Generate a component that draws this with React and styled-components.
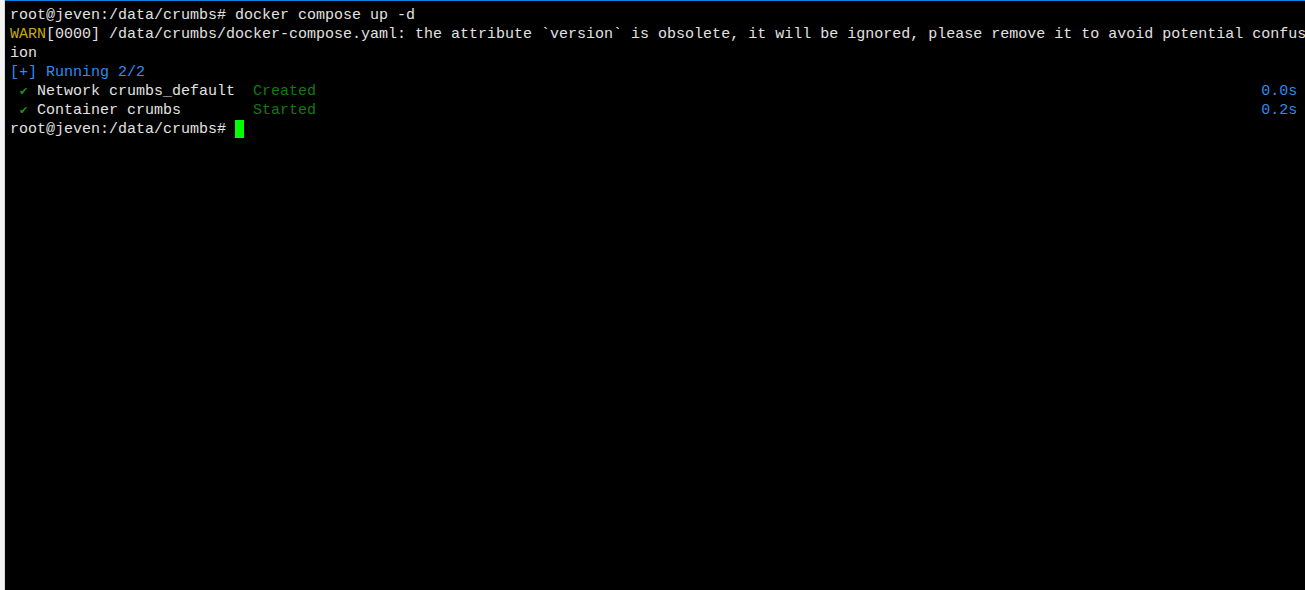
import React from "react";
import styled, { createGlobalStyle } from "styled-components";

const Global = createGlobalStyle`
  html, body { margin: 0; padding: 0; background: #f0f0f0; }
  body { width: 1305px; height: 590px; overflow: hidden; }
`;

const Window = styled.div`
  display: flex;
  width: 1305px;
  height: 590px;
  background: #f0f0f0;
`;

const Frame = styled.div`
  width: 4px;
  flex: none;
  background: #f3f3f3;
  border-right: 1px solid #d9d9d9;
`;

const Terminal = styled.div`
  flex: 1;
  min-width: 0;
  background: #000;
  border-top: 1px solid #0a84e0;
  padding: 5px 0 0 5px;
  overflow: hidden;
  font-family: "Liberation Mono", "DejaVu Sans Mono", monospace;
  font-size: 15px;
  line-height: 19px;
  color: #e2e2e2;
`;

const Line = styled.div`
  white-space: pre;
  height: 19px;
`;

const Tone = styled.span`
  color: ${(p) =>
    ({
      warn: "#c8aa00",
      blue: "#2f8cf0",
      green: "#137a13",
      check: "#1f8f1f",
    })[p.$tone] || "inherit"};
`;

const Check = styled.span`
  display: inline-block;
  width: 9px;
  text-align: center;
  color: #1f8f1f;
  font-family: "DejaVu Sans", sans-serif;
  font-size: 11px;
`;

const Cursor = styled.span`
  display: inline-block;
  width: 9px;
  height: 18px;
  background: #00ff00;
  vertical-align: -5px;
`;

const pad = (n) => " ".repeat(n);

export default function App() {
  return (
    <>
      <Global />
      <Window>
        <Frame />
        <Terminal>
          <Line>root@jeven:/data/crumbs# docker compose up -d</Line>
          <Line>
            <Tone $tone="warn">WARN</Tone>[0000] /data/crumbs/docker-compose.yaml: the attribute `version` is obsolete, it will be ignored, please remove it to avoid potential confus
          </Line>
          <Line>ion</Line>
          <Line>
            <Tone $tone="blue">[+] Running 2/2</Tone>
          </Line>
          <Line>
            {" "}
            <Check>✔</Check> Network crumbs_default  <Tone $tone="green">Created</Tone>
            {pad(105)}
            <Tone $tone="blue">0.0s</Tone>
          </Line>
          <Line>
            {" "}
            <Check>✔</Check> Container crumbs{pad(8)}<Tone $tone="green">Started</Tone>
            {pad(105)}
            <Tone $tone="blue">0.2s</Tone>
          </Line>
          <Line>
            root@jeven:/data/crumbs# <Cursor />
          </Line>
        </Terminal>
      </Window>
    </>
  );
}
